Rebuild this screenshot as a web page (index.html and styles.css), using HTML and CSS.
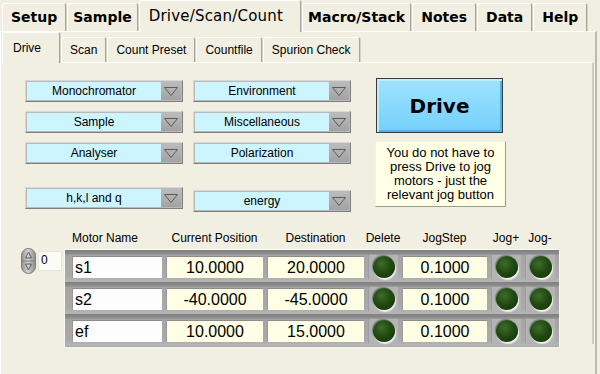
FILE: index.html
```html
<!DOCTYPE html>
<html lang="en">
<head>
  <meta charset="UTF-8" />
  <title>Drive/Scan/Count</title>
  <link rel="stylesheet" href="styles.css">
</head>
<body>

  <!-- Main tabs -->
  <div class="tabs">
    <div class="tab">Setup</div>
    <div class="tab tab-tight">Sample</div>
    <div class="tab active">Drive/Scan/Count</div>
    <div class="tab tab-tight">Macro/Stack</div>
    <div class="tab">Notes</div>
    <div class="tab">Data</div>
    <div class="tab">Help</div>
  </div>

  <div class="page">
    <!-- Sub tabs -->
    <div class="subtabs">
      <div class="subtab active">Drive</div>
      <div class="subtab">Scan</div>
      <div class="subtab">Count Preset</div>
      <div class="subtab">Countfile</div>
      <div class="subtab">Spurion Check</div>
    </div>

    <div class="subpage">
      <div class="controls">
        <div class="ring-col">
          <div class="ring"><span class="ring-text">Monochromator</span><span class="ring-arrow"><svg width="14" height="9" viewBox="0 0 14 9"><polygon points="0.5,0.5 13.5,0.5 7,8.5" fill="none" stroke="#5a5a5a"/></svg></span></div>
          <div class="ring"><span class="ring-text">Sample</span><span class="ring-arrow"><svg width="14" height="9" viewBox="0 0 14 9"><polygon points="0.5,0.5 13.5,0.5 7,8.5" fill="none" stroke="#5a5a5a"/></svg></span></div>
          <div class="ring"><span class="ring-text">Analyser</span><span class="ring-arrow"><svg width="14" height="9" viewBox="0 0 14 9"><polygon points="0.5,0.5 13.5,0.5 7,8.5" fill="none" stroke="#5a5a5a"/></svg></span></div>
          <div class="ring ring-sep"><span class="ring-text">h,k,l and q</span><span class="ring-arrow"><svg width="14" height="9" viewBox="0 0 14 9"><polygon points="0.5,0.5 13.5,0.5 7,8.5" fill="none" stroke="#5a5a5a"/></svg></span></div>
        </div>
        <div class="ring-col">
          <div class="ring"><span class="ring-text">Environment</span><span class="ring-arrow"><svg width="14" height="9" viewBox="0 0 14 9"><polygon points="0.5,0.5 13.5,0.5 7,8.5" fill="none" stroke="#5a5a5a"/></svg></span></div>
          <div class="ring"><span class="ring-text">Miscellaneous</span><span class="ring-arrow"><svg width="14" height="9" viewBox="0 0 14 9"><polygon points="0.5,0.5 13.5,0.5 7,8.5" fill="none" stroke="#5a5a5a"/></svg></span></div>
          <div class="ring"><span class="ring-text">Polarization</span><span class="ring-arrow"><svg width="14" height="9" viewBox="0 0 14 9"><polygon points="0.5,0.5 13.5,0.5 7,8.5" fill="none" stroke="#5a5a5a"/></svg></span></div>
          <div class="ring ring-sep-low"><span class="ring-text">energy</span><span class="ring-arrow"><svg width="14" height="9" viewBox="0 0 14 9"><polygon points="0.5,0.5 13.5,0.5 7,8.5" fill="none" stroke="#5a5a5a"/></svg></span></div>
        </div>
        <div class="drive-col">
          <button class="drive-btn">Drive</button>
          <div class="note">You do not have to press Drive to jog motors - just the relevant jog button</div>
        </div>
      </div>

      <div class="motors">
        <!-- array index -->
        <div class="index-ctl">
          <div class="spinner">
            <svg width="15" height="26" viewBox="0 0 15 26">
              <defs>
                <linearGradient id="sp" x1="0" y1="0" x2="1" y2="0">
                  <stop offset="0" stop-color="#8d8d8d"/>
                  <stop offset="0.45" stop-color="#d6d6d6"/>
                  <stop offset="1" stop-color="#8a8a8a"/>
                </linearGradient>
              </defs>
              <rect x="0.5" y="0.5" width="14" height="25" rx="7" fill="url(#sp)" stroke="#7c7c7c"/>
              <line x1="2" y1="13" x2="13" y2="13" stroke="#7a7a7a"/>
              <polygon points="7.5,4 10.5,10 4.5,10" fill="none" stroke="#5c5c5c"/>
              <polygon points="7.5,22 10.5,16 4.5,16" fill="none" stroke="#5c5c5c"/>
            </svg>
          </div>
          <div class="index-box">0</div>
        </div>

        <div class="motor-table">
          <div class="motor-labels">
            <span class="lbl-left">Motor Name</span>
            <span>Current Position</span>
            <span>Destination</span>
            <span>Delete</span>
            <span>JogStep</span>
            <span>Jog+</span>
            <span>Jog-</span>
          </div>
          <div class="cluster">
            <div class="motor-row">
              <div class="field name">s1</div>
              <div class="field num">10.0000</div>
              <div class="field num">20.0000</div>
              <div class="led-cell"><div class="led"></div></div>
              <div class="field num">0.1000</div>
              <div class="led-cell"><div class="led"></div></div>
              <div class="led-cell"><div class="led"></div></div>
            </div>
            <div class="motor-row">
              <div class="field name">s2</div>
              <div class="field num">-40.0000</div>
              <div class="field num">-45.0000</div>
              <div class="led-cell"><div class="led"></div></div>
              <div class="field num">0.1000</div>
              <div class="led-cell"><div class="led"></div></div>
              <div class="led-cell"><div class="led"></div></div>
            </div>
            <div class="motor-row">
              <div class="field name">ef</div>
              <div class="field num">10.0000</div>
              <div class="field num">15.0000</div>
              <div class="led-cell"><div class="led"></div></div>
              <div class="field num">0.1000</div>
              <div class="led-cell"><div class="led"></div></div>
              <div class="led-cell"><div class="led"></div></div>
            </div>
          </div>
        </div>
      </div>
    </div>
  </div>

</body>
</html>
```

FILE: styles.css
```css
body {
  margin: 0;
  background-color: #f1efe2;
  font-family: "Liberation Sans", Arial, sans-serif;
  color: #000;
  width: 600px;
  height: 374px;
  overflow: hidden;
}
.tabs {
  display: flex;
  align-items: flex-end;
  height: 31px;
  padding-left: 2px;
}
.tab {
  box-sizing: border-box;
  height: 28px;
  padding: 0 8px;
  margin-right: 1px;
  font-family: "DejaVu Sans", sans-serif;
  font-weight: bold;
  font-size: 14px;
  line-height: 27px;
  background-color: #f1efe2;
  border-top: 1px solid #fff;
  border-left: 1px solid #fff;
  border-right: 1px solid #a7a496;
  box-shadow: 1px 0 0 #d6d3c4;
  border-radius: 3px 3px 0 0;
}
.tab-tight {
  padding: 0 5px;
}
.tab.active {
  height: 32px;
  margin-bottom: -1px;
  padding: 0 17px 0 9px;
  line-height: 30px;
  position: relative;
  z-index: 1;
  font-weight: normal;
  font-size: 15px;
  letter-spacing: 0.2px;
}
.page {
  box-sizing: border-box;
  height: 343px;
  width: 597px;
  border-top: 1px solid #fff;
  border-left: 1px solid #fff;
  border-right: 2px solid #bcb9ab;
}
.subtabs {
  display: flex;
  align-items: flex-end;
  height: 30px;
  padding-left: 1px;
}
.subtab {
  box-sizing: border-box;
  height: 25px;
  padding: 0 8px;
  margin-right: 1px;
  font-size: 12px;
  line-height: 24px;
  background-color: #f1efe2;
  border-top: 1px solid #fff;
  border-left: 1px solid #fff;
  border-right: 1px solid #a7a496;
  box-shadow: 1px 0 0 #d6d3c4;
  border-radius: 3px 3px 0 0;
}
.subtab.active {
  height: 31px;
  margin-bottom: -1px;
  padding: 0 18px 0 10px;
  line-height: 30px;
  position: relative;
  z-index: 1;
}
.subpage {
  box-sizing: border-box;
  height: 282px;
  margin-right: 1px;
  border-top: 1px solid #fff;
  border-right: 2px solid #cfccbd;
}
.controls {
  display: flex;
  align-items: flex-start;
  padding: 15px 0 0 24px;
}
.ring-col {
  display: flex;
  flex-direction: column;
  gap: 9px;
  margin-top: 2px;
  margin-right: 10px;
}
.ring {
  box-sizing: border-box;
  width: 158px;
  height: 22px;
  display: flex;
  padding: 1px;
  border: 1px solid;
  border-color: #d8d8d8 #7e7e7e #7e7e7e #d8d8d8;
  background-color: #b9b9b9;
}
.ring-sep {
  margin-top: 14px;
}
.ring-sep-low {
  margin-top: 17px;
}
.ring-text {
  flex: 1;
  background-color: #ccf5ff;
  text-align: center;
  font-size: 12px;
  line-height: 18px;
}
.ring-arrow {
  width: 20px;
  display: flex;
  align-items: center;
  justify-content: center;
  background: linear-gradient(#bcbcbc, #a2a2a2);
}
.drive-col {
  margin-left: 14px;
  display: flex;
  flex-direction: column;
}
.drive-btn {
  box-sizing: border-box;
  width: 127px;
  height: 55px;
  margin-left: 1px;
  border: 1px solid #3a3a3a;
  background: linear-gradient(#9ee3ff, #74d0fb);
  box-shadow: inset 2px 2px 0 #bdeeff, inset -2px -2px 0 #4fb2e2;
  font-family: "DejaVu Sans", sans-serif;
  font-weight: bold;
  font-size: 20px;
  color: #000;
  padding: 0;
}
.note {
  box-sizing: border-box;
  width: 131px;
  height: 66px;
  margin-top: 8px;
  padding-top: 4px;
  background-color: #ffffe6;
  border: 1px solid;
  border-color: #f4f2e6 #9e9c92 #9e9c92 #f4f2e6;
  font-size: 13px;
  line-height: 14px;
  text-align: center;
}
.motors {
  display: flex;
  align-items: flex-start;
  margin-top: 18px;
  padding-left: 20px;
}
.index-ctl {
  display: flex;
  align-items: flex-start;
  margin-top: 18px;
  gap: 2px;
}
.spinner {
  width: 15px;
  height: 26px;
}
.index-box {
  box-sizing: border-box;
  width: 24px;
  height: 20px;
  margin-top: 3px;
  padding-left: 2px;
  background-color: #fcfcf6;
  border: 1px solid #e6e4d8;
  font-size: 12px;
  line-height: 17px;
}
.motor-table {
  margin-left: 2px;
}
.motor-labels {
  display: grid;
  grid-template-columns: 90px 97px 97px 30px 85px 30px 30px;
  column-gap: 4px;
  padding-left: 8px;
  height: 16px;
  margin-bottom: 3px;
  font-size: 12px;
  line-height: 16px;
}
.motor-labels span {
  white-space: nowrap;
  display: flex;
  justify-content: center;
}
.motor-labels .lbl-left {
  justify-content: flex-start;
}
.cluster {
  border: 1px solid #faf9f1;
  background-color: #a9a9a9;
  padding-bottom: 1px;
}
.motor-row {
  box-sizing: border-box;
  height: 32px;
  display: grid;
  grid-template-columns: 90px 97px 97px 30px 85px 30px 30px;
  column-gap: 4px;
  padding: 6px 4px 4px 7px;
  background: linear-gradient(#7f7f7f 0, #8e8e8e 4px, #a4a4a4 5px, #aaaaaa 26px, #b6b6b6 100%);
}
.field {
  box-sizing: border-box;
  height: 22px;
  border-top: 1px solid #8c8c8c;
  border-left: 1px solid #9a9a9a;
  font-size: 16px;
  line-height: 21px;
  white-space: nowrap;
}
.field.name {
  background-color: #fdfdfd;
  padding-left: 2px;
}
.field.num {
  background-color: #ffffe6;
  text-align: center;
}
.led-cell {
  display: flex;
  align-items: center;
  justify-content: center;
  background-color: #b4b4b4;
  border-top: 1px solid #9c9c9c;
  border-left: 1px solid #9c9c9c;
  margin-top: -2px;
  margin-bottom: -1px;
}
.led {
  width: 22px;
  height: 22px;
  border-radius: 50%;
  background: radial-gradient(circle at 40% 35%, #3f6d2b 0, #214a12 45%, #12300a 100%);
  box-shadow: 1px 2px 1px #eeeeee, -1px -1px 1px #7a7a7a;
}
```
